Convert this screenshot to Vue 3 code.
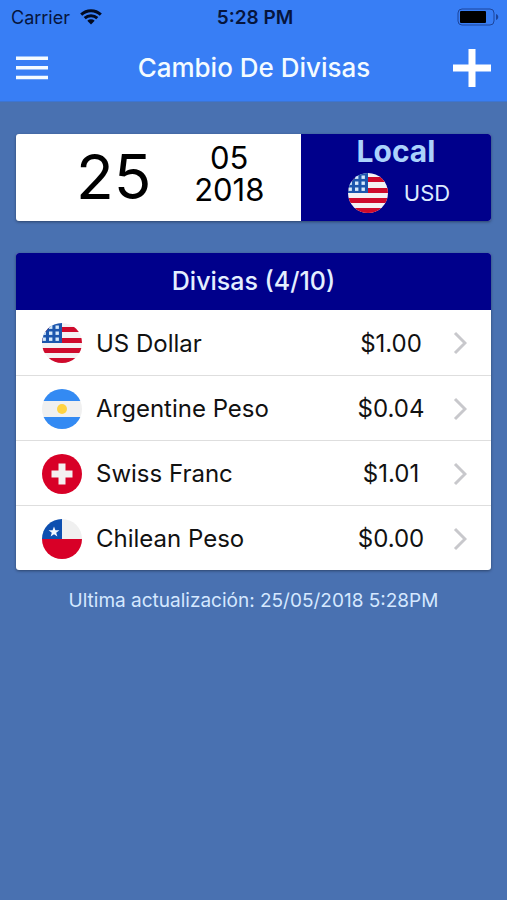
<script setup>
import { h } from 'vue'

const currencies = [
  { code: 'us', name: 'US Dollar', value: '$1.00' },
  { code: 'ar', name: 'Argentine Peso', value: '$0.04' },
  { code: 'ch', name: 'Swiss Franc', value: '$1.01' },
  { code: 'cl', name: 'Chilean Peso', value: '$0.00' },
]

const rect = (x, y, width, height, fill) => h('rect', { x, y, width, height, fill })

const usFlag = () => {
  const parts = [rect(0, 0, 40, 40, '#f4f1f3')]
  for (const y of [4, 15, 25, 35]) parts.push(rect(0, y, 40, 5, '#cf0a2c'))
  parts.push(rect(0, 0, 20, 20, '#1c56ad'))
  for (const y of [2.5, 8.5, 14.5]) {
    for (const x of [0.5, 7, 13.5]) parts.push(rect(x, y, 3.4, 3.4, '#d5e9fb'))
  }
  return parts
}

const flags = {
  us: usFlag,
  ar: () => [
    rect(0, 0, 40, 40, '#f0f0f0'),
    rect(0, 0, 40, 12, '#338af3'),
    rect(0, 28, 40, 12, '#338af3'),
    h('circle', { cx: 20, cy: 20, r: 5, fill: '#ffd342' }),
  ],
  ch: () => [
    rect(0, 0, 40, 40, '#d80027'),
    h('path', { d: 'M16.5 9.5h7v7h7v7h-7v7h-7v-7h-7v-7h7z', fill: '#f4f0f0' }),
  ],
  cl: () => [
    rect(0, 0, 40, 40, '#f0f0f0'),
    rect(0, 20, 40, 20, '#d80027'),
    rect(0, 0, 20, 20, '#0d4fb0'),
    h('path', {
      d: 'M12 7.5l1.4 3.8h4l-3.2 2.4 1.2 3.9-3.4-2.3-3.4 2.3 1.2-3.9-3.2-2.4h4z',
      fill: '#f4f8ff',
    }),
  ],
}

const Flag = (props) =>
  h('svg', { viewBox: '0 0 40 40', 'aria-hidden': 'true' }, flags[props.code]())
Flag.props = ['code']
</script>

<template>
  <div class="screen">
    <header class="top">
      <div class="status">
        <span class="carrier">
          Carrier
          <svg class="wifi" viewBox="0 0 22 16" aria-hidden="true">
            <path d="M1.2 5.6a14.2 14.2 0 0 1 19.6 0" />
            <path d="M4.7 9.2a9.2 9.2 0 0 1 12.6 0" />
            <path class="dot" d="M11 15.6l-3.7-3.8a5.4 5.4 0 0 1 7.4 0z" />
          </svg>
        </span>
        <span class="clock">5:28 PM</span>
        <svg class="battery" viewBox="0 0 42 18" aria-hidden="true">
          <rect class="shell" x="1" y="1" width="36" height="16" rx="4" />
          <rect x="3" y="3" width="26" height="12" rx="1" />
          <path class="tip" d="M39 6c3 1 3 5 0 6z" />
        </svg>
      </div>
      <div class="navbar">
        <button class="icon-button" type="button" aria-label="Menú">
          <svg class="menu" viewBox="0 0 32 24" aria-hidden="true">
            <path d="M0 2.2h32M0 11.8h32M0 21.4h32" />
          </svg>
        </button>
        <h1>Cambio De Divisas</h1>
        <button class="icon-button" type="button" aria-label="Agregar">
          <svg class="plus" viewBox="0 0 40 40" aria-hidden="true">
            <path d="M1 20h38M20 1v38" />
          </svg>
        </button>
      </div>
    </header>

    <main>
      <section class="card summary">
        <time class="date" datetime="2018-05-25">
          <span class="day">25</span>
          <span class="month">
            <span>05</span>
            <span>2018</span>
          </span>
        </time>
        <div class="local">
          <h2>Local</h2>
          <div class="base">
            <Flag class="flag" code="us" />
            <span>USD</span>
          </div>
        </div>
      </section>

      <section class="card">
        <h2 class="list-title">Divisas (4/10)</h2>
        <ul>
          <li v-for="c in currencies" :key="c.code">
            <a href="#">
              <Flag class="flag" :code="c.code" />
              <span class="name">{{ c.name }}</span>
              <span class="value">{{ c.value }}</span>
              <svg class="chevron" viewBox="0 0 14 24" aria-hidden="true">
                <path d="M2 2l10 10L2 22" />
              </svg>
            </a>
          </li>
        </ul>
      </section>

      <p class="updated">Ultima actualización: 25/05/2018 5:28PM</p>
    </main>
  </div>
</template>

<style>
body {
  margin: 0;
  background: #4971b1;
}
</style>

<style scoped>
.screen {
  min-height: 100vh;
  background: #4971b1;
  font-family: Inter, "Liberation Sans", sans-serif;
  color: #111;
}

h1,
h2,
p,
ul {
  margin: 0;
  padding: 0;
  font-weight: 400;
}

.top {
  background: #387ef5;
  border-bottom: 1px solid #3c75d3;
}

.status {
  display: grid;
  grid-template-columns: 1fr auto 1fr;
  align-items: center;
  height: 34px;
  padding: 0 8px 0 11px;
  color: #06153d;
  font-size: 18px;
}

.carrier {
  display: flex;
  align-items: center;
  gap: 10px;
}

.wifi {
  width: 22px;
  height: 16px;
  fill: none;
  stroke: #020a20;
  stroke-width: 3;
}

.wifi .dot {
  fill: #020a20;
  stroke: none;
}

.clock {
  font-size: 19px;
  font-weight: 600;
}

.battery {
  justify-self: end;
  width: 42px;
  height: 18px;
  fill: #000;
}

.battery .shell {
  fill: none;
  stroke: #1c459b;
  stroke-width: 1;
}

.battery .tip {
  fill: #1c459b;
}

.navbar {
  display: grid;
  grid-template-columns: 40px 1fr 40px;
  align-items: center;
  height: 67px;
  padding: 0 15px 0 16px;
}

h1 {
  text-align: center;
  color: #f4fbff;
  font-size: 26px;
  font-weight: 500;
  line-height: 32px;
}

.icon-button {
  display: flex;
  align-items: center;
  height: 40px;
  padding: 0;
  border: 0;
  background: none;
}

.menu {
  width: 32px;
  height: 24px;
  stroke: #f4fbff;
  stroke-width: 3.5;
}

.plus {
  width: 40px;
  height: 40px;
  stroke: #fff;
  stroke-width: 7;
}

main {
  display: flex;
  flex-direction: column;
  gap: 32px;
  padding: 32px 16px;
}

.card {
  overflow: hidden;
  border-radius: 3px;
  background: #fff;
  box-shadow: 0 1px 3px rgba(0, 0, 0, 0.4);
}

.summary {
  display: grid;
  grid-template-columns: 3fr 2fr;
  min-height: 87px;
}

.date {
  display: grid;
  grid-template-columns: 1fr 1fr;
  align-items: start;
  padding: 0 14px 0 40px;
  color: #000;
  text-align: center;
}

.day {
  font-size: 62px;
  line-height: 86px;
}

.month {
  display: grid;
  padding-top: 8px;
  font-size: 31px;
  line-height: 32px;
}

.local {
  background: #00008b;
  color: #dcebff;
  text-align: center;
}

.local h2 {
  color: #abd2fb;
  font-size: 30px;
  font-weight: 700;
  line-height: 34px;
}

.base {
  display: flex;
  align-items: center;
  justify-content: center;
  gap: 16px;
  padding-top: 5px;
  padding-left: 6px;
  font-size: 22px;
}

.flag {
  flex: none;
  width: 40px;
  height: 40px;
  border-radius: 50%;
}

.list-title {
  background: #00008b;
  color: #e4efff;
  text-align: center;
  font-size: 25px;
  font-weight: 500;
  line-height: 57px;
}

ul {
  list-style: none;
}

li + li {
  border-top: 1px solid #dedede;
}

a {
  display: grid;
  grid-template-columns: 40px 1fr 100px 26px;
  align-items: center;
  height: 64px;
  padding: 1px 24px 0 26px;
  box-sizing: border-box;
  color: #111;
  text-decoration: none;
  font-size: 24px;
}

li:first-child a {
  height: 65px;
}

.name {
  padding-left: 14px;
}

.value {
  text-align: center;
}

.chevron {
  justify-self: end;
  width: 14px;
  height: 24px;
  fill: none;
  stroke: #c8c8cc;
  stroke-width: 3;
}

.updated {
  margin-top: -16px;
  text-align: center;
  color: #d5e8ff;
  font-size: 19px;
  line-height: 30px;
}
</style>
